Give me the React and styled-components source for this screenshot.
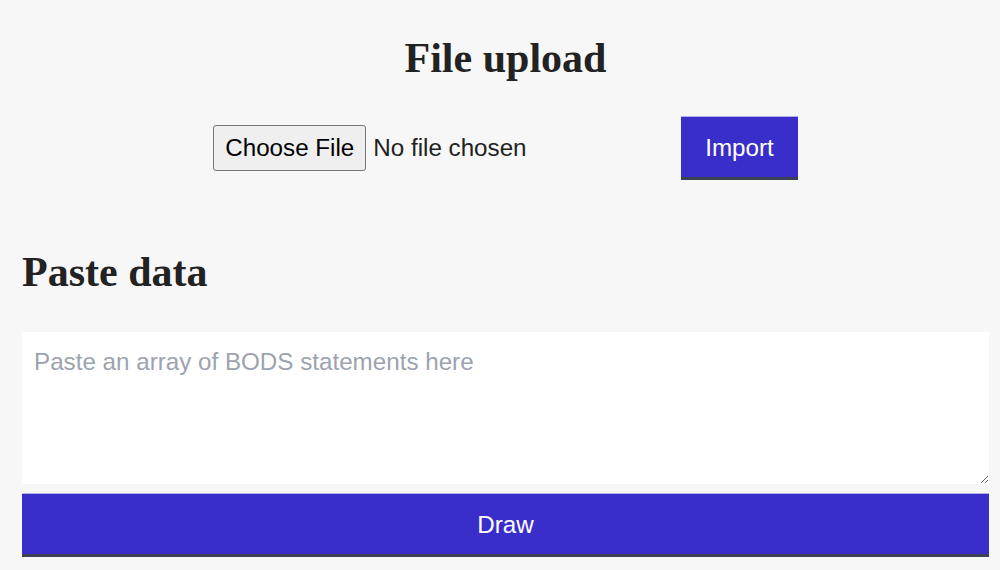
import React from "react";
import styled, { createGlobalStyle } from "styled-components";

const GlobalStyle = createGlobalStyle`
  html, body {
    margin: 0;
    padding: 0;
    background: #f7f7f7;
    font-family: "Liberation Sans", Arial, sans-serif;
    color: #222;
  }
  * { box-sizing: border-box; }
`;

const Page = styled.main`
  padding: 35px 11px 0 22px;
  display: flex;
  flex-direction: column;
`;

const Heading = styled.h2`
  margin: 0;
  font-family: "Liberation Serif", "Times New Roman", serif;
  font-weight: 700;
  font-size: 42px;
  line-height: 46px;
  color: #222;
  text-align: ${(p) => (p.$center ? "center" : "left")};
`;

const UploadRow = styled.form`
  margin-top: 35px;
  display: flex;
  justify-content: center;
  align-items: center;
  gap: 20px;
`;

const FileInput = styled.input`
  width: 448px;
  font-family: "Liberation Sans", Arial, sans-serif;
  font-size: 24.2px;
  color: #222;

  &::file-selector-button {
    font-family: "Liberation Sans", Arial, sans-serif;
    font-size: 24.2px;
    color: #000;
    background: #efefef;
    border: 1px solid #767676;
    border-radius: 3px;
    padding: 8px 11px;
    margin-right: 7px;
  }
`;

const BlueButton = styled.button`
  font-family: "Liberation Sans", Arial, sans-serif;
  font-size: 24.2px;
  line-height: 1.15;
  color: #fff;
  background: #3a2ecb;
  border: none;
  border-top: 1px solid #b3b0e6;
  border-bottom: 3px solid #3b4254;
  padding: 17px 24px 15px;
  cursor: pointer;
  width: ${(p) => (p.$full ? "100%" : "auto")};
`;

const PasteSection = styled.section`
  margin-top: 69px;
  display: flex;
  flex-direction: column;
`;

const DataArea = styled.textarea`
  margin-top: 37px;
  width: 100%;
  height: 152px;
  border: none;
  background: #fff;
  padding: 12px;
  font-family: "Liberation Sans", Arial, sans-serif;
  font-size: 24.2px;
  line-height: 1.5;
  color: #222;
  display: block;

  &::placeholder {
    color: #9ca3af;
  }
  &:focus {
    outline: none;
  }
`;

const DrawWrap = styled.div`
  margin-top: 9px;
  display: flex;
`;

export default function App() {
  return (
    <>
      <GlobalStyle />
      <Page>
        <Heading $center>File upload</Heading>
        <UploadRow onSubmit={(e) => e.preventDefault()}>
          <FileInput type="file" />
          <BlueButton type="submit">Import</BlueButton>
        </UploadRow>
        <PasteSection>
          <Heading>Paste data</Heading>
          <DataArea placeholder="Paste an array of BODS statements here" />
          <DrawWrap>
            <BlueButton $full type="button">Draw</BlueButton>
          </DrawWrap>
        </PasteSection>
      </Page>
    </>
  );
}
